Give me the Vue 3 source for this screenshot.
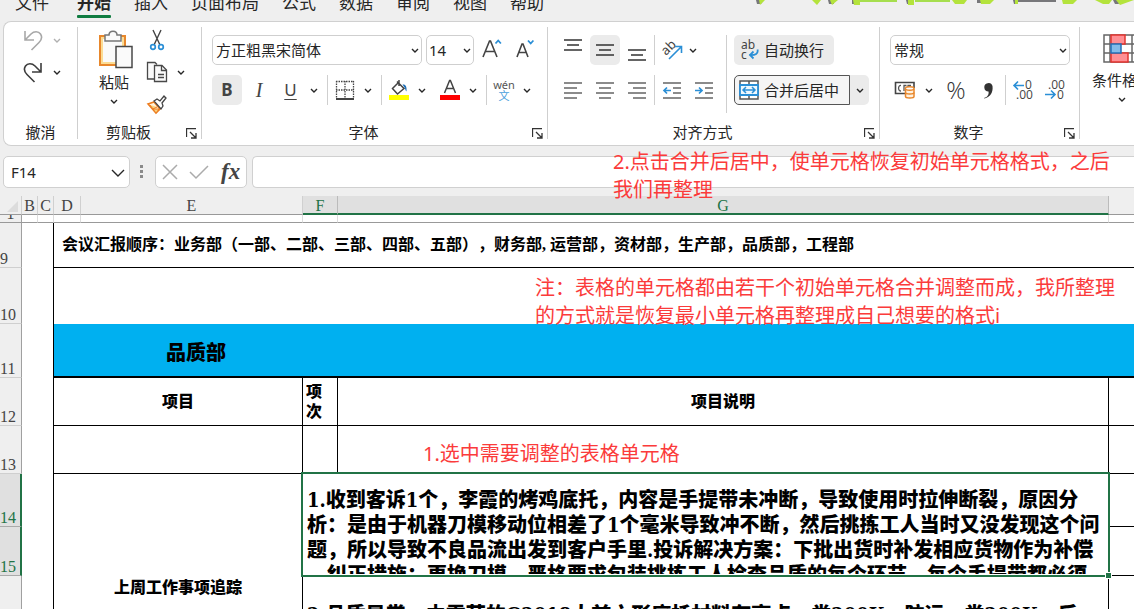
<script setup>
import { ref } from 'vue'

const tabs = ['文件', '开始', '插入', '页面布局', '公式', '数据', '审阅', '视图', '帮助']
const activeTab = ref('开始')
const fontName = ref('方正粗黑宋简体')
const fontSize = ref('14')
const numberFormat = ref('常规')
const cellName = ref('F14')
const formula = ref('')

const columns = ['B', 'C', 'D', 'E', 'F', 'G', '']
const selectedColumns = ['F', 'G']

const complaint = [
  '1.收到客诉1个，李霞的烤鸡底托，内容是手提带未冲断，导致使用时拉伸断裂，原因分',
  '析：是由于机器刀模移动位相差了1个毫米导致冲不断，然后挑拣工人当时又没发现这个问',
  '题，所以导致不良品流出发到客户手里.投诉解决方案：下批出货时补发相应货物作为补偿',
  '，纠正措施：更换刀模，严格要求包装挑拣工人检查品质的每个环节，每个手提带都必须'
]
const nextItem = '2.品质异常，由雪萍的G2018大前六形底托材料有亮点，类200K，防运，类200K，后'

const vAlign = [
  { label: '顶端对齐', y: 4 },
  { label: '垂直居中', y: 9, on: true },
  { label: '底端对齐', y: 14 }
]
const hAlign = [
  { label: '左对齐', a: 'M1 5h18M1 10h13M1 15h18M1 20h13' },
  { label: '居中', a: 'M1 5h18M4 10h12M1 15h18M4 20h12' },
  { label: '右对齐', a: 'M1 5h18M6 10h13M1 15h18M6 20h13' }
]
</script>

<template>
  <div class="app">
    <nav class="tabs">
      <button v-for="t in tabs" :key="t" type="button" class="tab" :class="{ active: t === activeTab }" @click="activeTab = t">{{ t }}</button>
    </nav>
    <svg class="banner" width="384" height="7" viewBox="0 0 384 7" aria-hidden="true">
      <g fill="#77777a">
        <path d="M6 0h8l-3 4H7zM78 0h6v4h-5zM102 0h5v4h-5zM156 0h5v4h-4zM227 0h8l-3 3h-5zM263 0h5v4h-4zM264 0h42v2h-37zM363 0h17l-12 4h-3z" />
      </g>
      <g fill="#b4e33c">
        <path d="M9 0h6l-5 5zM62 0h9l-4 5zM80 0h8l-6 5zM103 0h7v5h-6zM158 0h6v5h-6zM202 0h15l-3 4h-9zM230 0h14l-4 4h-9zM265 0h3v4h-3zM312 0h15l-4 4h-10zM345 0h17l-3 4h-6zM366 0h18l-14 5z" />
      </g>
      <path d="M110 0h37v2h-37zM165 0h35v2h-35z" fill="#a6de4e" />
    </svg>

    <section class="ribbon">
      <div class="group undo">
        <div class="history">
          <div class="line">
            <button type="button" class="ico" aria-label="撤消">
              <svg width="20" height="22" viewBox="0 0 20 22" fill="none" stroke="#a8a8a8" stroke-width="1.6"><path d="M2 2v9h9M2.500 10.500L8 5c3-3 7.500-3 9.500 0s1 6-1.500 8.500L8.500 21" /></svg>
            </button>
            <button type="button" class="chev pale" aria-label="撤消选项"><svg width="8" height="5" viewBox="0 0 8 5"><path d="M1 1l3 3 3-3" /></svg></button>
          </div>
          <div class="line">
            <button type="button" class="ico" aria-label="恢复">
              <svg width="20" height="22" viewBox="0 0 20 22" fill="none" stroke="#3d3d3d" stroke-width="1.600"><path d="M18 2v9H9M17.500 10.500L12 5C9 2 4.500 2 2.500 5s-1 6 1.500 8.500l7.500 7.500" /></svg>
            </button>
            <button type="button" class="chev" aria-label="恢复选项"><svg width="8" height="5" viewBox="0 0 8 5"><path d="M1 1l3 3 3-3" /></svg></button>
          </div>
        </div>
        <div class="caption plain">撤消</div>
      </div>
      <i class="divider"></i>

      <div class="group clipboard">
        <div class="clip-tools">
          <button type="button" class="big">
            <svg class="paste" width="36" height="40" viewBox="0 0 36 40" fill="none">
              <path d="M2 6h25v29H2z" fill="#fbdc94" stroke="#e8872c" stroke-width="2" />
              <path d="M5 9h19v23H5z" fill="#fafafa" />
              <path d="M7 11V5h4c0-5 8-5 8 0h4v6z" fill="#fafafa" stroke="#777" stroke-width="1.500" />
              <path d="M18 16.500h16v21H18z" fill="#fafafa" stroke="#484848" stroke-width="1.500" />
            </svg>
            <span>粘贴</span>
            <svg class="v" width="8" height="5" viewBox="0 0 8 5"><path d="M1 1l3 3 3-3" /></svg>
          </button>
          <div class="clip-side">
            <button type="button" class="ico" aria-label="剪切">
              <svg width="20" height="22" viewBox="0 0 20 22" fill="none"><path d="M6 1l7 15M14 1L7 16" stroke="#444" stroke-width="1.400" /><circle cx="6" cy="18" r="2.300" stroke="#2b8fd6" stroke-width="1.700" /><circle cx="14" cy="18" r="2.300" stroke="#2b8fd6" stroke-width="1.700" /></svg>
            </button>
            <div class="line">
              <button type="button" class="ico" aria-label="复制">
                <svg width="22" height="22" viewBox="0 0 22 22" fill="#fafafa" stroke="#484848" stroke-width="1.300"><path d="M9 18H1.500V1.500H9l2 2" /><path d="M8.500 4.500H16l4.500 4.500v11.500h-12z" /><path d="M15.500 5v4.500h5M12 13.500h6M12 16.500h6" fill="none" /></svg>
              </button>
              <button type="button" class="chev" aria-label="复制选项"><svg width="8" height="5" viewBox="0 0 8 5"><path d="M1 1l3 3 3-3" /></svg></button>
            </div>
            <button type="button" class="ico" aria-label="格式刷">
              <svg width="22" height="22" viewBox="0 0 22 22" fill="none"><path d="M2 11l6-2 6 7-4 4z" fill="#fff3dd" stroke="#ed7d20" stroke-width="1.600" /><path d="M4 12l3 4 4-2M7 16l3 4 3-4z" fill="#fbd37e" stroke="#ed7d20" /><path d="M8 8l3-2 3 2 4-5 2 2-4 5 1 3-2 3z" fill="#fff" stroke="#444" stroke-width="1.300" /></svg>
            </button>
          </div>
        </div>
        <div class="caption">剪贴板<button type="button" class="launch" aria-label="剪贴板设置"><svg width="11" height="11" viewBox="0 0 11 11"><path d="M.5 9V.5H10M4 4l6 6M10 5v5H5" /></svg></button></div>
      </div>
      <i class="divider"></i>

      <div class="group font">
        <div class="row gap4">
          <label class="combo name"><select v-model="fontName" aria-label="字体"><option>方正粗黑宋简体</option></select><svg class="v" width="8" height="5" viewBox="0 0 8 5"><path d="M1 1l3 3 3-3" /></svg></label>
          <label class="combo size"><select v-model="fontSize" aria-label="字号"><option>14</option></select><svg class="v" width="8" height="5" viewBox="0 0 8 5"><path d="M1 1l3 3 3-3" /></svg></label>
          <button type="button" class="btn grow" aria-label="增大字号">
            <svg width="22" height="22" viewBox="0 0 22 22" fill="none"><path d="M3 18L9.500 2h1L17 18M5.500 12.500h9" stroke="#444" stroke-width="1.600" /><path d="M15.500 4.500l2.700-3 2.700 3" stroke="#2b8fd6" stroke-width="1.800" /></svg>
          </button>
          <button type="button" class="btn" aria-label="减小字号">
            <svg width="22" height="22" viewBox="0 0 22 22" fill="none"><path d="M3 18L8 5h1l5 13M5 13.500h7" stroke="#444" stroke-width="1.600" /><path d="M14 1.500l2.700 3 2.700-3" stroke="#2b8fd6" stroke-width="1.800" /></svg>
          </button>
        </div>
        <div class="row">
          <button type="button" class="btn on letter bold">B</button>
          <button type="button" class="btn letter italic">I</button>
          <button type="button" class="btn letter under">U</button>
          <button type="button" class="chev" aria-label="下划线选项"><svg width="8" height="5" viewBox="0 0 8 5"><path d="M1 1l3 3 3-3" /></svg></button>
          <i class="bar"></i>
          <button type="button" class="btn slim" aria-label="边框">
            <svg width="20" height="20" viewBox="0 0 20 20" fill="none" stroke="#444"><path d="M1 1.500h18M1 10h18M1.500 1v17M10 1v17M18.500 1v17" stroke-width="1.300" stroke-dasharray="1.500 1" /><path d="M1 19h18" stroke-width="2" /></svg>
          </button>
          <button type="button" class="chev" aria-label="边框选项"><svg width="8" height="5" viewBox="0 0 8 5"><path d="M1 1l3 3 3-3" /></svg></button>
          <i class="bar"></i>
          <button type="button" class="btn slim" aria-label="填充颜色">
            <svg width="20" height="22" viewBox="0 0 20 22" fill="none"><path d="M8 2.500l7 7-6.500 5.500-5-5.500L10 3V1M10 3v4" stroke="#444" stroke-width="1.500" /><path d="M13.500 5.500c3-.5 4.500 2 4 7-1.500-1-1-3-2-4z" fill="#1d6fb8" /><path d="M0 16h20v5H0z" fill="#ff0" /></svg>
          </button>
          <button type="button" class="chev" aria-label="填充选项"><svg width="8" height="5" viewBox="0 0 8 5"><path d="M1 1l3 3 3-3" /></svg></button>
          <button type="button" class="btn slim color" aria-label="字体颜色">
            <svg width="20" height="22" viewBox="0 0 20 22" fill="none"><path d="M4.500 14L9.600 1.500h.8L15.500 14M6.500 9.500h7" stroke="#444" stroke-width="1.500" /><path d="M0 16h20v5H0z" fill="red" /></svg>
          </button>
          <button type="button" class="chev" aria-label="颜色选项"><svg width="8" height="5" viewBox="0 0 8 5"><path d="M1 1l3 3 3-3" /></svg></button>
          <i class="bar"></i>
          <button type="button" class="btn slim pinyin"><span>wén</span><span class="wen">文</span></button>
          <button type="button" class="chev" aria-label="拼音选项"><svg width="8" height="5" viewBox="0 0 8 5"><path d="M1 1l3 3 3-3" /></svg></button>
        </div>
        <div class="caption">字体<button type="button" class="launch" aria-label="字体设置"><svg width="11" height="11" viewBox="0 0 11 11"><path d="M.5 9V.5H10M4 4l6 6M10 5v5H5" /></svg></button></div>
      </div>
      <i class="divider"></i>

      <div class="group align">
        <div class="split">
          <div class="stack">
            <div class="row gap2">
              <button v-for="v in vAlign" :key="v.label" type="button" class="btn" :class="{ on: v.on }" :aria-label="v.label">
                <svg width="20" height="30" viewBox="0 0 20 30" stroke="#333" stroke-width="1.500"><path :d="`M1 ${v.y + 1}h18M4 ${v.y + 6}h12M1 ${v.y + 11}h18`" /></svg>
              </button>
              <i class="bar tight"></i>
              <button type="button" class="btn" aria-label="方向">
                <svg width="24" height="24" viewBox="0 0 24 24"><text x="0" y="0" transform="translate(6 18) rotate(-45)" class="ab">ab</text><path d="M9 21L21 9M15 8.500h6.500V15" fill="none" stroke="#2b8fd6" stroke-width="1.600" /></svg>
              </button>
              <button type="button" class="chev near" aria-label="方向选项"><svg width="8" height="5" viewBox="0 0 8 5"><path d="M1 1l3 3 3-3" /></svg></button>
            </div>
            <div class="row gap2">
              <button v-for="h in hAlign" :key="h.label" type="button" class="btn" :aria-label="h.label">
                <svg width="20" height="24" viewBox="0 0 20 24" stroke="#666" stroke-width="1.700"><path :d="h.a" /></svg>
              </button>
              <i class="bar tight"></i>
              <button type="button" class="btn" aria-label="减少缩进">
                <svg width="20" height="24" viewBox="0 0 20 24" fill="none" stroke="#666" stroke-width="1.700"><path d="M1 5h18M11 10h8M11 15h8M1 20h18" /><path d="M9 12.500H2M5 9.500l-3 3 3 3" stroke="#2b8fd6" /></svg>
              </button>
              <button type="button" class="btn" aria-label="增加缩进">
                <svg width="20" height="24" viewBox="0 0 20 24" fill="none" stroke="#666" stroke-width="1.700"><path d="M1 5h18M11 10h8M11 15h8M1 20h18" /><path d="M1 12.500h7M5 9.500l3 3-3 3" stroke="#2b8fd6" /></svg>
              </button>
            </div>
          </div>
          <i class="inner"></i>
          <div class="stack wide">
            <button type="button" class="text-btn wrap">
              <svg width="20" height="22" viewBox="0 0 20 22" fill="none"><text x="2" y="10" class="abc">ab</text><text x="2" y="20" class="abc">c</text><path d="M18.500 10.500c1 4-2 6-8 5.500M14.500 12.500L11 16l3.500 3.500" stroke="#2b8fd6" stroke-width="1.800" /></svg>
              <span>自动换行</span>
            </button>
            <div class="merge">
              <button type="button" class="text-btn joined">
                <svg width="20" height="20" viewBox="0 0 20 20" fill="none"><path d="M1 1h18v18H1zM10 1v4M10 15v4" fill="#fff" stroke="#555" stroke-width="1.500" /><path d="M1 5h18v10H1z" fill="#eef7fd" stroke="#2b8fd6" stroke-width="1.800" /><path d="M4 10h12M7 7l-3 3 3 3M13 7l3 3-3 3" stroke="#2b8fd6" stroke-width="1.500" /></svg>
                <span>合并后居中</span>
              </button>
              <button type="button" class="chev more" aria-label="合并选项"><svg width="8" height="5" viewBox="0 0 8 5"><path d="M1 1l3 3 3-3" /></svg></button>
            </div>
          </div>
        </div>
        <div class="caption">对齐方式<button type="button" class="launch" aria-label="对齐设置"><svg width="11" height="11" viewBox="0 0 11 11"><path d="M.5 9V.5H10M4 4l6 6M10 5v5H5" /></svg></button></div>
      </div>
      <i class="divider"></i>

      <div class="group number">
        <div class="row">
          <label class="combo format"><select v-model="numberFormat" aria-label="数字格式"><option>常规</option></select><svg class="v" width="8" height="5" viewBox="0 0 8 5"><path d="M1 1l3 3 3-3" /></svg></label>
        </div>
        <div class="row gap2">
          <button type="button" class="btn" aria-label="会计数字格式">
            <svg width="22" height="18" viewBox="0 0 22 18" fill="none"><path d="M11 12.500H1.500v-11h18.500V7" stroke="#444" stroke-width="1.600" /><path d="M7 4.500c-3-.5-3.500 5.500 0 5.500M12.500 4.500H10V10M17 4.500h-3V7h3" stroke="#555" stroke-width="1.300" /><path d="M11.500 7.500v8c0 2 8.500 2 8.500 0v-8" fill="#fff1df" stroke="#e8872c" stroke-width="1.500" /><ellipse cx="15.700" cy="7.500" rx="4.300" ry="1.700" fill="#fff" stroke="#e8872c" stroke-width="1.500" /><path d="M11.500 11.500c0 2 8.500 2 8.500 0" stroke="#e8872c" stroke-width="1.500" /></svg>
          </button>
          <button type="button" class="chev cash" aria-label="货币选项"><svg width="8" height="5" viewBox="0 0 8 5"><path d="M1 1l3 3 3-3" /></svg></button>
          <button type="button" class="btn percent">%</button>
          <button type="button" class="btn" aria-label="千位分隔样式">
            <svg width="12" height="18" viewBox="0 0 12 18"><path d="M2 17c4-1 5-4 4.500-6.500A4.200 4.200 0 1 1 10.500 5c.8 6-2 11-8 12.500z" fill="#333" /></svg>
          </button>
          <i class="bar tight"></i>
          <button type="button" class="btn" aria-label="增加小数位数">
            <svg width="22" height="22" viewBox="0 0 22 22"><text x="13" y="10" class="dec">0</text><text x="4" y="20" class="dec">.00</text><path d="M12 6.500H2M6 2.500l-4 4 4 4" fill="none" stroke="#2b8fd6" stroke-width="1.600" /></svg>
          </button>
          <button type="button" class="btn" aria-label="减少小数位数">
            <svg width="22" height="22" viewBox="0 0 22 22"><text x="4" y="10" class="dec">.00</text><text x="13" y="20" class="dec">0</text><path d="M1 15.500h10M7 11.500l4 4-4 4" fill="none" stroke="#2b8fd6" stroke-width="1.600" /></svg>
          </button>
        </div>
        <div class="caption">数字<button type="button" class="launch" aria-label="数字设置"><svg width="11" height="11" viewBox="0 0 11 11"><path d="M.5 9V.5H10M4 4l6 6M10 5v5H5" /></svg></button></div>
      </div>
      <i class="divider"></i>

      <div class="group styles">
        <button type="button" class="big cond">
          <svg width="38" height="30" viewBox="0 0 38 30" fill="#fff" stroke="#666" stroke-width="1.500"><path d="M1 1h36v27H1zM1 10h36M1 19h36M7 1v27M29 1v27" /><path d="M8 1h14v9H8zM8 19h17v9H8z" fill="#ff8f94" stroke="#e3352f" /><path d="M8 10h10v9H8z" fill="#83bbe9" stroke="#2271b8" /></svg>
          <span>条件格式</span>
          <svg class="v" width="8" height="5" viewBox="0 0 8 5"><path d="M1 1l3 3 3-3" /></svg>
        </button>
      </div>
    </section>

    <section class="formula-bar">
      <label class="name-box"><input v-model="cellName" aria-label="名称框" /><svg class="v" width="14" height="8" viewBox="0 0 14 8"><path d="M1 1l6 6 6-6" /></svg></label>
      <svg class="dots" width="3" height="14" viewBox="0 0 3 14" fill="#8a8a8a"><path d="M0 0h3v3H0zM0 5h3v3H0zM0 10h3v3H0z" /></svg>
      <div class="entry">
        <button type="button" aria-label="取消"><svg width="16" height="16" viewBox="0 0 16 16"><path d="M1 1l14 14M15 1L1 15" /></svg></button>
        <button type="button" aria-label="输入"><svg width="20" height="16" viewBox="0 0 20 16"><path d="M1 8l6 6L19 2" /></svg></button>
        <button type="button" class="fx">fx</button>
      </div>
      <input v-model="formula" class="formula" aria-label="编辑栏" />
    </section>

    <main class="sheet">
      <table>
        <colgroup><col class="c-head" /><col class="c-b" /><col class="c-b" /><col class="c-d" /><col class="c-e" /><col class="c-f" /><col class="c-g" /><col /></colgroup>
        <thead>
          <tr class="r-head">
            <th class="corner"><svg width="11" height="11" viewBox="0 0 11 11"><path d="M11 0v11H0z" fill="#dcdcdc" /></svg></th>
            <th v-for="(c, i) in columns" :key="i" scope="col" :class="{ sel: selectedColumns.includes(c) }">{{ c }}</th>
          </tr>
        </thead>
        <tbody>
          <tr class="r-1"><th scope="row"><div class="peek">1</div></th><td v-for="(c, i) in columns" :key="i"></td></tr>
          <tr class="r-9"><th scope="row">9</th><td colspan="2" rowspan="8" class="margin"></td><td colspan="5" class="line-b order">会议汇报顺序：业务部（一部、二部、三部、四部、五部），财务部, 运营部，资材部，生产部，品质部，工程部</td></tr>
          <tr class="r-10"><th scope="row">10</th><td colspan="5"></td></tr>
          <tr class="r-11"><th scope="row">11</th><td colspan="3" class="dept">品质部</td><td colspan="2" class="dept"></td></tr>
          <tr class="r-12"><th scope="row">12</th><td colspan="2" class="line-b line-r center">项目</td><td class="line-b line-r seq">项<br />次</td><td class="line-b line-r center">项目说明</td><td class="line-b"></td></tr>
          <tr class="r-13"><th scope="row">13</th><td colspan="2" class="line-b line-r"></td><td class="line-b line-r"></td><td class="line-b line-r"></td><td class="line-b"></td></tr>
          <tr class="r-14">
            <th scope="row" class="sel">14</th>
            <td colspan="2" rowspan="3" class="line-r center">上周工作事项追踪</td>
            <td colspan="2" rowspan="2" class="line-b line-r picked">
              <div class="long"><p v-for="l in complaint" :key="l">{{ l }}</p></div>
              <div class="frame"><i class="handle"></i></div>
            </td>
            <td class="line-b"></td>
          </tr>
          <tr class="r-15"><th scope="row" class="sel">15</th><td class="line-b"></td></tr>
          <tr class="r-16"><th scope="row">16</th><td colspan="2" class="line-r top"><div class="long next"><p>{{ nextItem }}</p></div></td><td></td></tr>
        </tbody>
      </table>
    </main>

    <p class="note step2">2.点击合并后居中，使单元格恢复初始单元格格式，之后<br />我们再整理</p>
    <p class="note remark">注：表格的单元格都由若干个初始单元格合并调整而成，我所整理<br />的方式就是恢复最小单元格再整理成自己想要的格式i</p>
    <p class="note step1">1.选中需要调整的表格单元格</p>
  </div>
</template>

<style>
body { margin: 0; overflow: hidden; }
</style>

<style scoped>
* { box-sizing: border-box; }
.app {
  position: relative;
  display: flex;
  flex-direction: column;
  height: 100vh;
  overflow: hidden;
  background: #efefef;
  color: #262626;
  font: 15px/20px "Noto Sans", "Noto Sans CJK SC", sans-serif;
  text-spacing-trim: space-all;
}
button, input, select { font: inherit; color: inherit; border: 0; padding: 0; margin: 0; background: none; }
button { display: flex; align-items: center; justify-content: center; flex: none; white-space: nowrap; }
svg { flex: none; display: block; }
p { margin: 0; }

.tabs { display: flex; gap: 23px; height: 21px; padding-left: 15px; flex: none; overflow: hidden; }
.tab { position: relative; align-items: flex-start; height: 18px; font-size: 17px; line-height: 5px; }
.tab:first-child { margin-right: 5px; }
.tab.active { font-weight: 700; }
.tab.active::after { content: ""; position: absolute; left: 0; right: 0; bottom: 0; height: 3px; border-radius: 1px; background: #107c41; }
.banner { position: absolute; left: 750px; top: 0; }

.ribbon { display: flex; flex: none; height: 125px; margin-left: 3px; background: #fff; border: 1px solid #d0d0d0; border-right: 0; border-radius: 8px 0 0 8px; overflow: hidden; }
.divider { flex: none; width: 1px; margin: 5px 0 6px; background: #cfcfcf; }
.group { position: relative; display: flex; flex-direction: column; flex: none; padding: 13px 0 0 10px; }
.caption { display: flex; justify-content: center; align-items: center; height: 22px; margin: auto 0 2px -10px; padding-right: 22px; position: relative; }
.caption.plain { padding-right: 0; margin-left: 0; }
.launch { position: absolute; right: 4px; top: 7px; }
.launch svg { fill: none; stroke: #333; stroke-width: 1.3; }
.row, .line { display: flex; align-items: center; }
.row { height: 30px; }
.row + .row { margin-top: 10px; }
.gap4 { gap: 4px; }
.gap2 { gap: 2px; }
.btn { width: 30px; height: 30px; border-radius: 5px; }
.slim { width: 28px; }
.on { background: #ebebeb; }
.chev { width: 17px; height: 30px; }
.chev svg, .v { fill: none; stroke: #262626; stroke-width: 1.4; }
.chev.pale svg { stroke: #b0b0b0; }
.bar { flex: none; width: 1px; height: 30px; margin: 0 3px 0 5px; background: #cfcfcf; }
.bar.tight { margin: 0; }

.undo { width: 73px; padding: 7px 0 0; }
.history { display: flex; flex-direction: column; gap: 10px; padding-left: 18px; }
.history .line { height: 22px; gap: 4px; }
.history .ico { width: 22px; }
.clipboard { width: 123px; padding: 7px 0 0 10px; }
.clip-tools { display: flex; gap: 8px; padding-left: 6px; }
.big { flex-direction: column; justify-content: flex-start; }
.big .v { margin-top: 7px; }
.big span { margin-top: 2px; }
.paste { margin-left: 4px; }
.clip-tools .big { width: 40px; padding-top: 1px; }
.clip-side { display: flex; flex-direction: column; align-items: flex-start; gap: 10px; }
.clip-side .ico { width: 30px; height: 22px; }
.clip-side .line { height: 22px; }

.font { width: 345px; }
.align { width: 331px; }
.number { width: 199px; }
.combo { position: relative; display: block; height: 30px; }
.combo select { appearance: none; width: 100%; height: 30px; padding-left: 3px; background: #fff; border: 1px solid #cfcfcf; border-radius: 5px; }
.combo .v { position: absolute; right: 3px; top: 13px; pointer-events: none; }
.combo.name { width: 210px; }
.combo.size { width: 48px; }
.combo.size select { padding-left: 2px; }
.combo.format { width: 180px; }
.grow { margin-left: -2px; }
.letter { font-size: 17px; color: #444; }
.bold { font-weight: 700; }
.italic { margin-left: 2px; font-family: "Liberation Serif", serif; font-size: 20px; font-style: italic; }
.under { width: 29px; margin-left: 2px; text-decoration: underline; text-underline-offset: 3px; }
.color { margin-left: 6px; }
.pinyin { flex-direction: column; font-size: 11px; line-height: 11px; color: #555; }
.wen { color: #4a9fdc; }
.ab { font: 13px "Noto Sans", sans-serif; fill: #444; }
.abc { font: 12px "Noto Sans", sans-serif; fill: #444; }
.dec { font: 12px "Open Sans", sans-serif; fill: #444; }
.near { margin-left: -5px; }
.cash { margin-left: -2px; }
.percent { font: 300 24px/24px "Open Sans", sans-serif; color: #333; margin-left: 2px; }
.split { display: flex; }
.stack { display: flex; flex-direction: column; width: 168px; }
.stack.wide { width: auto; align-items: flex-start; gap: 10px; }
.inner { width: 1px; height: 78px; margin-right: 7px; background: #cfcfcf; }
.text-btn { gap: 5px; height: 30px; padding: 0 10px 0 5px; }
.wrap { background: #ebebeb; border-radius: 5px; }
.merge { display: flex; background: #ebebeb; border-radius: 5px; }
.joined { padding: 0 10px 0 4px; background: #f5f5f5; border: 1px solid #555; border-radius: 5px 0 0 5px; }
.more { width: 19px; }
.styles { padding: 12px 0 0 12px; }
.cond span { margin-top: 6px; }

.formula-bar { display: flex; flex: none; align-items: center; height: 32px; margin: 10px 0 8px 3px; }
.name-box { position: relative; width: 127px; height: 32px; }
.name-box input { width: 100%; height: 32px; padding-left: 7px; background: #fff; border: 1px solid #d0d0d0; border-radius: 5px; }
.name-box .v { position: absolute; right: 5px; top: 13px; }
.dots { margin: 0 12px 0 10px; }
.entry { display: flex; align-items: center; justify-content: space-around; width: 92px; height: 32px; margin-right: 5px; background: #fff; border: 1px solid #d0d0d0; border-radius: 5px; }
.entry svg { fill: none; stroke: #ababab; stroke-width: 1.5; }
.entry .fx { font: italic 700 23px/24px "Liberation Serif", serif; color: #444; }
.formula { flex: 1; height: 32px; min-width: 0; background: #fff; border: 1px solid #d0d0d0; border-right: 0; border-radius: 5px 0 0 5px; }

table { width: 100%; table-layout: fixed; border-collapse: separate; border-spacing: 0; background: #fff; }
.c-head { width: 22px; } .c-b { width: 16px; } .c-d { width: 27px; } .c-e { width: 222px; } .c-f { width: 35px; } .c-g { width: 771px; }
th { padding: 0; background: #efefef; color: #444; font: 16px/16px "Liberation Serif", serif; text-align: center; }
td { padding: 0; color: #000; font: 900 16px/20px "Liberation Serif", "Noto Sans CJK SC", sans-serif; }
thead th { border-right: 1px solid #d0d0d0; border-bottom: 1px solid #999; padding-top: 2px; line-height: 14px; }
thead th:last-child { border-right: 0; }
thead th.sel { background: #e0e0e0; border-right-color: #bbb; border-bottom: 2px solid #217346; padding-top: 3px; color: #217346; }
.corner svg { margin-left: 7px; }
tbody th { vertical-align: bottom; text-align: left; padding-left: 0; border-right: 1px solid #a0a0a0; border-bottom: 1px solid #cfcfcf; }
tbody th.sel { background: #e0e0e0; color: #217346; border-right: 2px solid #217346; border-bottom-color: #aaa; }
.r-head { height: 19px; }
.r-1 { height: 8px; }
.r-1 th, .r-1 td { border-bottom: 1px solid #999; }
.r-1 td { border-right: 1px solid #ddd; }
.r-1 td:last-child { border-right: 0; }
.peek { display: flex; align-items: flex-end; justify-content: center; height: 7px; overflow: hidden; }
.r-9 { height: 45px; } .r-10 { height: 56px; } .r-11 { height: 54px; } .r-12, .r-13 { height: 48px; }
.r-14 { height: 53px; } .r-15 { height: 49px; } .r-16 { height: 126px; }
.margin { border-right: 1px solid #000; }
.line-b { border-bottom: 1px solid #000; }
.line-r { border-right: 1px solid #000; }
.order { padding-left: 8px; font-weight: 700; white-space: nowrap; }
.dept { padding-top: 5px; background: #00b0f0; border-bottom: 2px solid #000; font-size: 20px; text-align: center; }
.center { text-align: center; }
.seq { padding-left: 3px; }
.top { vertical-align: top; }
.picked { position: relative; vertical-align: top; }
.long { height: 100px; padding: 14px 0 0 4px; overflow: hidden; white-space: nowrap; font: 900 20px/25px "DejaVu Serif Condensed", "DejaVu Serif", "Noto Sans CJK SC", sans-serif; }
.long p { height: 25px; }
.long.next { padding-top: 27px; }
.frame { position: absolute; inset: -2px; border: 2px solid #217346; pointer-events: none; }
.handle { position: absolute; right: -4px; bottom: -4px; width: 7px; height: 7px; background: #217346; border: 1px solid #fff; }

.note { position: absolute; color: #fb3b3b; font-size: 20px; line-height: 28px; white-space: nowrap; }
.step2 { left: 613px; top: 148px; }
.remark { left: 535px; top: 274px; }
.step1 { left: 423px; top: 440px; }
</style>
